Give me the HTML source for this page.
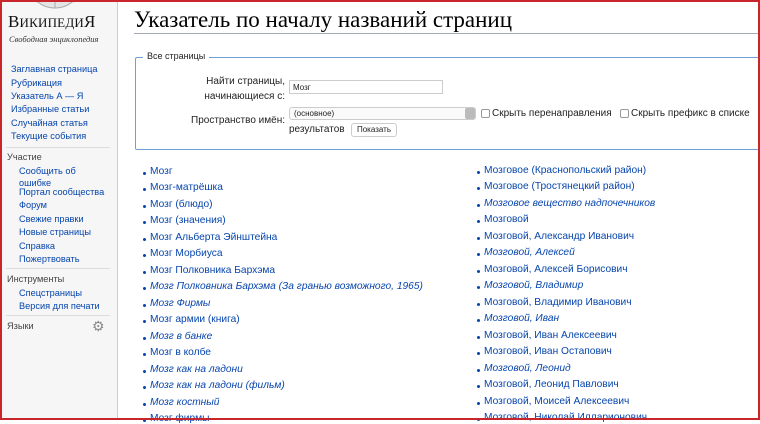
<!DOCTYPE html>
<html><head><meta charset="utf-8"><style>
*{margin:0;padding:0;box-sizing:border-box}
body{width:760px;height:420px;overflow:hidden;background:#fff;font-family:"Liberation Sans",sans-serif;position:relative}
.frame{position:absolute;left:0;top:0;width:760px;height:420px;border:2px solid #c8262a;z-index:10;pointer-events:none}
.side{position:absolute;left:0;top:0;width:118px;height:420px;background:#f6f6f6;border-right:1px solid #a7d7f9}
.a{position:absolute;font-size:9.2px;color:#0645ad;white-space:nowrap}
.h{position:absolute;font-size:9.2px;color:#444;white-space:nowrap}
.sep{position:absolute;left:6px;width:104px;height:1px;background:#ddd}
.t{position:absolute;white-space:nowrap}
.li{position:absolute;font-size:10.2px;color:#0645ad;white-space:nowrap}
.li:before{content:"";position:absolute;left:-7px;top:6px;width:3px;height:3px;border-radius:50%;background:#0645ad}
.i{font-style:italic}
</style></head><body>
<div class="frame"></div>
<div class="side">
 <svg style="position:absolute;left:26px;top:-48px" width="58" height="58"><circle cx="29" cy="29" r="27" fill="#e4e4e4" stroke="#aaa"/><path d="M10 50 Q29 40 48 50" stroke="#999" fill="none"/><path d="M29 30 V56" stroke="#aaa"/></svg>
 <div class="t" style="left:8px;top:12px;font-family:'Liberation Serif',serif;font-size:17px;color:#111;letter-spacing:0.2px">В<span style="font-size:13px">ИКИПЕДИ</span>Я</div>
 <div class="t" style="left:9px;top:34px;font-family:'Liberation Serif',serif;font-style:italic;font-size:8.5px;color:#333">Свободная энциклопедия</div>
 <div class="a" style="left:11px;top:64px">Заглавная страница</div>
 <div class="a" style="left:11px;top:78px">Рубрикация</div>
 <div class="a" style="left:11px;top:91px">Указатель А — Я</div>
 <div class="a" style="left:11px;top:104px">Избранные статьи</div>
 <div class="a" style="left:11px;top:118px">Случайная статья</div>
 <div class="a" style="left:11px;top:131px">Текущие события</div>
 <div class="sep" style="top:147px"></div>
 <div class="h" style="left:7px;top:152px">Участие</div>
 <div class="a" style="left:19px;top:165px;line-height:12px">Сообщить об<br>ошибке</div>
 <div class="a" style="left:19px;top:187px">Портал сообщества</div>
 <div class="a" style="left:19px;top:200px">Форум</div>
 <div class="a" style="left:19px;top:214px">Свежие правки</div>
 <div class="a" style="left:19px;top:227px">Новые страницы</div>
 <div class="a" style="left:19px;top:241px">Справка</div>
 <div class="a" style="left:19px;top:254px">Пожертвовать</div>
 <div class="sep" style="top:268px"></div>
 <div class="h" style="left:7px;top:274px">Инструменты</div>
 <div class="a" style="left:19px;top:288px">Спецстраницы</div>
 <div class="a" style="left:19px;top:301px">Версия для печати</div>
 <div class="sep" style="top:315px"></div>
 <div class="h" style="left:7px;top:321px">Языки</div>
 <div class="t" style="left:92px;top:318px;font-size:14px;color:#888">⚙</div>
</div>
<div class="t" style="left:134px;top:7px;font-family:'Liberation Serif',serif;font-size:23px;color:#000">Указатель по началу названий страниц</div>
<div style="position:absolute;left:134px;top:33px;width:626px;height:1px;background:#a2a9b1"></div>
<div style="position:absolute;left:135px;top:57px;width:640px;height:93px;border:1px solid #6f9fd8;border-radius:2px"></div>
<div class="t" style="left:143px;top:51px;background:#fff;padding:0 4px;font-size:9px;color:#222">Все страницы</div>
<div class="t" style="left:180px;top:74px;width:105px;text-align:right;font-size:10px;color:#222;line-height:15px">Найти страницы,<br>начинающиеся с:</div>
<div style="position:absolute;left:289px;top:80px;width:154px;height:14px;border:1px solid #ccc;font-size:8px;padding:2px 3px;color:#222">Мозг</div>
<div class="t" style="left:180px;top:115px;width:105px;text-align:right;font-size:10px;color:#222">Пространство имён:</div>
<div style="position:absolute;left:289px;top:107px;width:187px;height:13px;border:1px solid #ccc;border-radius:3px;font-size:8px;padding:1px 4px;color:#222;background:#fafafa">(основное)<span style="position:absolute;right:0;top:0;width:10px;height:11px;background:#bbb;border-radius:2px"></span></div>
<div style="position:absolute;left:481px;top:109px;width:9px;height:9px;border:1px solid #999;border-radius:2px"></div>
<div class="t" style="left:492px;top:108px;font-size:10px;color:#222">Скрыть перенаправления</div>
<div style="position:absolute;left:620px;top:109px;width:9px;height:9px;border:1px solid #999;border-radius:2px"></div>
<div class="t" style="left:631px;top:108px;font-size:10px;color:#222">Скрыть префикс в списке</div>
<div class="t" style="left:289px;top:124px;font-size:10px;color:#222">результатов</div>
<div style="position:absolute;left:351px;top:123px;width:46px;height:14px;border:1px solid #ccc;border-radius:3px;font-size:8px;text-align:center;line-height:12px;color:#222">Показать</div>

<div class="li" style="left:150px;top:166px">Мозг</div>
<div class="li" style="left:150px;top:182px">Мозг-матрёшка</div>
<div class="li" style="left:150px;top:199px">Мозг (блюдо)</div>
<div class="li" style="left:150px;top:215px">Мозг (значения)</div>
<div class="li" style="left:150px;top:232px">Мозг Альберта Эйнштейна</div>
<div class="li" style="left:150px;top:248px">Мозг Морбиуса</div>
<div class="li" style="left:150px;top:265px">Мозг Полковника Бархэма</div>
<div class="li i" style="left:150px;top:281px">Мозг Полковника Бархэма (За гранью возможного, 1965)</div>
<div class="li i" style="left:150px;top:298px">Мозг Фирмы</div>
<div class="li" style="left:150px;top:314px">Мозг армии (книга)</div>
<div class="li i" style="left:150px;top:331px">Мозг в банке</div>
<div class="li" style="left:150px;top:347px">Мозг в колбе</div>
<div class="li i" style="left:150px;top:364px">Мозг как на ладони</div>
<div class="li i" style="left:150px;top:380px">Мозг как на ладони (фильм)</div>
<div class="li i" style="left:150px;top:397px">Мозг костный</div>
<div class="li" style="left:150px;top:413px">Мозг фирмы</div>

<div class="li" style="left:484px;top:165px">Мозговое (Краснопольский район)</div>
<div class="li" style="left:484px;top:181px">Мозговое (Тростянецкий район)</div>
<div class="li i" style="left:484px;top:198px">Мозговое вещество надпочечников</div>
<div class="li" style="left:484px;top:214px">Мозговой</div>
<div class="li" style="left:484px;top:231px">Мозговой, Александр Иванович</div>
<div class="li i" style="left:484px;top:247px">Мозговой, Алексей</div>
<div class="li" style="left:484px;top:264px">Мозговой, Алексей Борисович</div>
<div class="li i" style="left:484px;top:280px">Мозговой, Владимир</div>
<div class="li" style="left:484px;top:297px">Мозговой, Владимир Иванович</div>
<div class="li i" style="left:484px;top:313px">Мозговой, Иван</div>
<div class="li" style="left:484px;top:330px">Мозговой, Иван Алексеевич</div>
<div class="li" style="left:484px;top:346px">Мозговой, Иван Остапович</div>
<div class="li i" style="left:484px;top:363px">Мозговой, Леонид</div>
<div class="li" style="left:484px;top:379px">Мозговой, Леонид Павлович</div>
<div class="li" style="left:484px;top:396px">Мозговой, Моисей Алексеевич</div>
<div class="li" style="left:484px;top:412px">Мозговой, Николай Илларионович</div>
</body></html>
